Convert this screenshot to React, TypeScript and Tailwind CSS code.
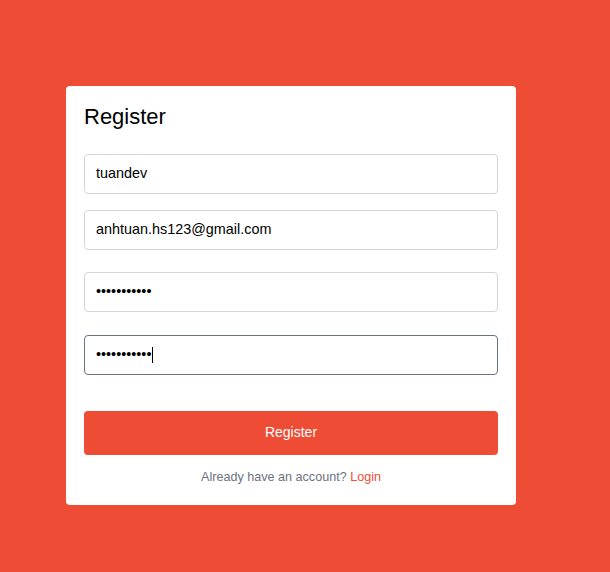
import React from "react";

const font = { fontFamily: '"Liberation Sans", Arial, sans-serif' };

function Field({ value, focused, mt }: { value: string; focused?: boolean; mt: string }) {
  return (
    <div
      className={`${mt} flex h-[40px] w-full items-center rounded-[4px] border bg-white px-[11px] text-[14.4px] text-black ${
        focused ? "border-[#6b7280]" : "border-[#d1d5db]"
      }`}
    >
      <span>{value}</span>
      {focused && <span className="ml-[1px] inline-block h-[16px] w-[1px] bg-black" />}
    </div>
  );
}

export default function App() {
  return (
    <div className="min-h-[572px] w-full bg-[#ef4c35] pl-[66px] pt-[86px]" style={font}>
      <div className="flex w-[450px] flex-col rounded-[4px] bg-white px-[18px] pb-[20px] pt-[18px]">
        <h1 className="h-[25px] text-[22px] leading-[26px] text-black">Register</h1>
        <Field mt="mt-[25px]" value="tuandev" />
        <Field mt="mt-[16px]" value="anhtuan.hs123@gmail.com" />
        <Field mt="mt-[22px]" value="•••••••••••" />
        <Field mt="mt-[23px]" value="•••••••••••" focused />
        <button className="mt-[36px] h-[44px] w-full rounded-[4px] bg-[#ef4c35] pb-[2px] text-[14px] text-white">
          Register
        </button>
        <p className="mt-[15px] text-center text-[12.6px] leading-[15px] text-[#6b7280]">
          Already have an account? <span className="text-[#ef4c35]">Login</span>
        </p>
      </div>
    </div>
  );
}
